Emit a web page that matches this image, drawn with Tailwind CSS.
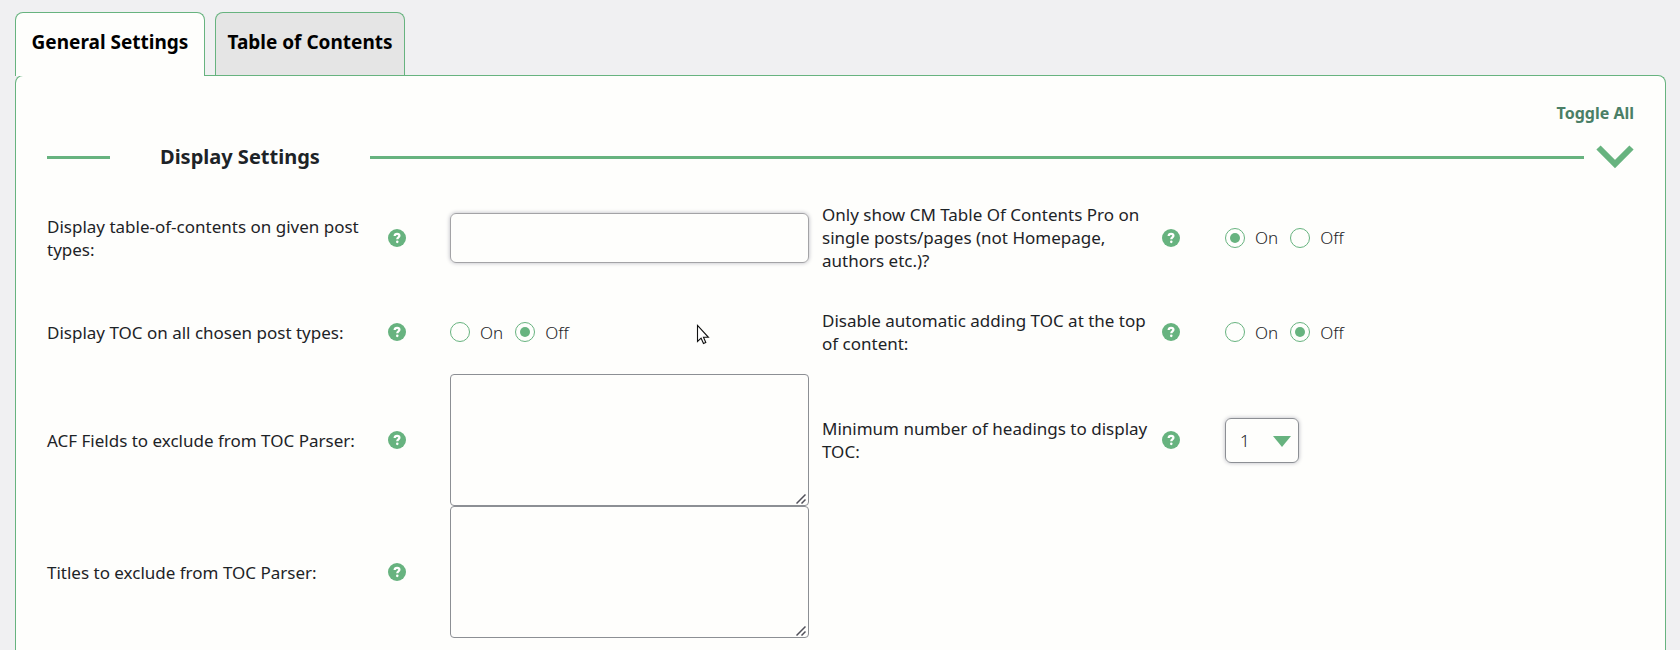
<!DOCTYPE html>
<html lang="en">
<head>
  <meta charset="UTF-8">
  <meta name="viewport" content="width=device-width, initial-scale=1.0">
  <title>CM Table Of Contents Pro - Settings</title>
  <script src="https://cdn.jsdelivr.net/npm/@tailwindcss/browser@4"></script>
</head>
<body class="min-h-screen flex flex-col overflow-hidden bg-[#f0f0f2] pt-3 pl-[15px] pr-[14px] font-['Noto_Sans','Open_Sans',sans-serif] text-[#1d2327]">
  <svg class="hidden">
    <symbol id="help" viewBox="0 0 20 20">
      <circle cx="10" cy="10" r="10" fill="#67b37f"/>
      <path d="M7.4 7.8C7.5 6.3 8.6 5.5 10.1 5.5c1.6 0 2.6.8 2.6 2.1 0 1.8-2.4 1.8-2.4 3.8" fill="none" stroke="#fff" stroke-width="2.5"/>
      <circle cx="10.3" cy="14.3" r="1.4" fill="#fff"/>
    </symbol>
    <symbol id="grip" viewBox="0 0 10 10">
      <path d="M.5 9.5l9-9M5.5 9.5l4-4" stroke="#50505a" stroke-width="1.5"/>
    </symbol>
  </svg>

  <!-- Tabs -->
  <nav class="relative z-10 -mb-px flex gap-[10px] text-[19px] font-bold text-black">
    <button class="h-16 w-[190px] whitespace-nowrap rounded-t-lg border border-b-0 border-[#67b37f] bg-[#fefefc] pb-[5px]">General Settings</button>
    <button class="h-[63px] w-[190px] whitespace-nowrap rounded-t-lg border border-b-0 border-[#67b37f] bg-[#e5e5e5] pb-1">Table of Contents</button>
  </nav>

  <main class="flex-1 rounded-t-lg border border-b-0 border-[#67b37f] bg-[#fefefc] px-[31px] pt-[25px] pb-3">
    <div class="flex justify-end">
      <button class="text-base leading-6 font-bold text-[#4a7f66]">Toggle All</button>
    </div>

    <div class="flex items-center pt-2">
      <span class="h-[3px] w-[63px] bg-[#67b37f]"></span>
      <h2 class="px-[50px] text-xl leading-[48px] font-bold whitespace-nowrap">Display Settings</h2>
      <span class="h-[3px] flex-1 bg-[#67b37f]"></span>
      <button class="ml-3" aria-label="Collapse section">
        <svg class="h-6 w-[38px]" viewBox="0 0 38 24"><path d="M2.5 2.5L19 19L35.5 2.5" fill="none" stroke="#67b37f" stroke-width="6"/></svg>
      </button>
    </div>

    <form class="grid grid-cols-[341fr_62fr_372fr_340fr_63fr_409fr] items-center pt-1 text-[17px] leading-[23px]">
      <label for="postTypes" class="py-[18px] pr-3">Display table-of-contents on given post types:</label>
      <svg class="size-[18px]"><use href="#help"/></svg>
      <div class="pr-[13px]">
        <input id="postTypes" type="text" class="block h-[50px] w-full rounded-md border border-[#a3a3a6] px-3 shadow-[0_0_4px_#b8b8c0]">
      </div>
      <span id="singleLabel" class="py-[18px] pr-3">Only show CM Table Of Contents Pro on single posts/pages (not Homepage, authors etc.)?</span>
      <svg class="size-[18px]"><use href="#help"/></svg>
      <div role="radiogroup" aria-labelledby="singleLabel" class="flex gap-3 font-light">
        <label class="flex items-center gap-[10px]"><input type="radio" name="single" checked class="grid size-5 appearance-none place-items-center rounded-full border border-[#67b37f] before:size-[10px] before:rounded-full checked:before:bg-[#67b37f]">On</label>
        <label class="flex items-center gap-[10px]"><input type="radio" name="single" class="grid size-5 appearance-none place-items-center rounded-full border border-[#67b37f] before:size-[10px] before:rounded-full checked:before:bg-[#67b37f]">Off</label>
      </div>

      <span id="allTypesLabel" class="py-[19px] pr-3">Display TOC on all chosen post types:</span>
      <svg class="size-[18px]"><use href="#help"/></svg>
      <div role="radiogroup" aria-labelledby="allTypesLabel" class="flex gap-3 font-light">
        <label class="flex items-center gap-[10px]"><input type="radio" name="allTypes" class="grid size-5 appearance-none place-items-center rounded-full border border-[#67b37f] before:size-[10px] before:rounded-full checked:before:bg-[#67b37f]">On</label>
        <label class="flex items-center gap-[10px]"><input type="radio" name="allTypes" checked class="grid size-5 appearance-none place-items-center rounded-full border border-[#67b37f] before:size-[10px] before:rounded-full checked:before:bg-[#67b37f]">Off</label>
      </div>
      <span id="autoLabel" class="py-[19px] pr-3">Disable automatic adding TOC at the top of content:</span>
      <svg class="size-[18px]"><use href="#help"/></svg>
      <div role="radiogroup" aria-labelledby="autoLabel" class="flex gap-3 font-light">
        <label class="flex items-center gap-[10px]"><input type="radio" name="auto" class="grid size-5 appearance-none place-items-center rounded-full border border-[#67b37f] before:size-[10px] before:rounded-full checked:before:bg-[#67b37f]">On</label>
        <label class="flex items-center gap-[10px]"><input type="radio" name="auto" checked class="grid size-5 appearance-none place-items-center rounded-full border border-[#67b37f] before:size-[10px] before:rounded-full checked:before:bg-[#67b37f]">Off</label>
      </div>

      <label for="acfFields" class="pr-3">ACF Fields to exclude from TOC Parser:</label>
      <svg class="size-[18px]"><use href="#help"/></svg>
      <div class="pr-[13px]">
        <div class="relative">
          <textarea id="acfFields" class="block h-33 w-full resize-none rounded border border-[#8c8f94] p-2"></textarea>
          <svg class="absolute right-[3px] bottom-[2px] size-[10px]"><use href="#grip"/></svg>
        </div>
      </div>
      <label for="minHeadings" class="pr-3">Minimum number of headings to display TOC:</label>
      <svg class="size-[18px]"><use href="#help"/></svg>
      <div>
        <div class="relative w-[74px]">
          <select id="minHeadings" class="h-[45px] w-full appearance-none rounded-md border border-[#8c8f94] pl-[14px] font-light shadow-[0_0_4px_#b8b8c0]">
            <option>1</option>
            <option>2</option>
            <option>3</option>
          </select>
          <svg class="pointer-events-none absolute top-[18px] right-2 h-[11px] w-[18px]" viewBox="0 0 18 11"><path d="M0 0h18l-9 11z" fill="#67b37f"/></svg>
        </div>
      </div>

      <label for="titles" class="pr-3">Titles to exclude from TOC Parser:</label>
      <svg class="size-[18px]"><use href="#help"/></svg>
      <div class="pr-[13px]">
        <div class="relative">
          <textarea id="titles" class="block h-33 w-full resize-none rounded border border-[#8c8f94] p-2"></textarea>
          <svg class="absolute right-[3px] bottom-[2px] size-[10px]"><use href="#grip"/></svg>
        </div>
      </div>
    </form>
  </main>

  <!-- Mouse pointer -->
  <svg class="pointer-events-none absolute top-[324px] left-[696px] h-[22px] w-[14px]" viewBox="0 0 14 22"><path d="M1.5 1.5v16l3.6-3.3 2.4 5.3 2.3-1-2.3-5.2h4.9z" fill="#fff" stroke="#111" stroke-width="1.1"/></svg>
</body>
</html>
